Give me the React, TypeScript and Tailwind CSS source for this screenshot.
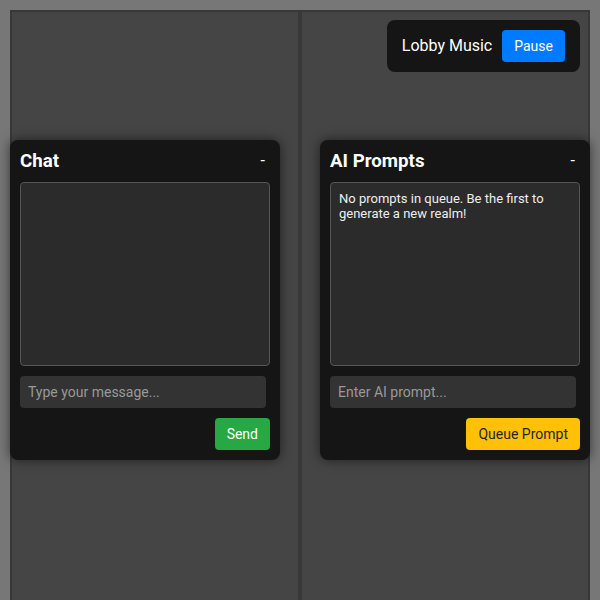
import { useState } from "react";

// ── Floating panel ─────────────────────────────────────────────────────────────
function Panel({
  title,
  placeholder,
  button,
  buttonClass,
  children,
  side,
}: {
  title: string;
  placeholder: string;
  button: string;
  buttonClass: string;
  children?: React.ReactNode;
  side: "left" | "right";
}) {
  const [value, setValue] = useState("");
  return (
    <div
      className={`absolute top-[130px] ${side === "left" ? "left-0" : "right-0"} w-[270px] p-[10px] rounded-lg bg-[#151515] shadow-[0_0_12px_rgba(0,0,0,0.55)] text-white`}
    >
      <div className="flex items-center justify-between h-[22px] mb-[10px]">
        <h3 className="text-[18.72px] font-bold leading-[22px]">{title}</h3>
        <button className="text-[16px] leading-none px-[5px]">-</button>
      </div>
      <div className="h-[184px] border border-[#555] rounded bg-[#2b2b2b] p-[8px] text-[13px] leading-[15px] text-[#eee]">
        {children}
      </div>
      <input
        value={value}
        onChange={(e) => setValue(e.target.value)}
        placeholder={placeholder}
        className="mt-[10px] w-[246px] h-[32px] px-[8px] rounded bg-[#333] text-[14px] text-white placeholder:text-[#999] outline-none"
      />
      <div className="flex justify-end mt-[10px]">
        <button className={`h-[32px] px-3 rounded text-[14px] ${buttonClass}`}>{button}</button>
      </div>
    </div>
  );
}

// ── Main Page ──────────────────────────────────────────────────────────────────
export default function App() {
  const [playing, setPlaying] = useState(true);

  return (
    <div
      className="w-[600px] h-[600px] overflow-hidden bg-[#777] pt-[10px] px-[10px]"
      style={{ fontFamily: "Roboto, 'Noto Sans', sans-serif" }}
    >
      <div className="relative flex h-[620px]">
        {/* Panes */}
        <div className="flex-1 bg-[#454545] border-2 border-[#383838]" />
        <div className="flex-1 bg-[#454545] border-2 border-[#383838]" />

        {/* Lobby music */}
        <div className="absolute top-[10px] right-[10px] flex items-center gap-[10px] py-[10px] px-[15px] rounded-lg bg-[#151515] text-white">
          <span className="text-[16px]">Lobby Music</span>
          <button
            onClick={() => setPlaying(!playing)}
            className="h-[32px] px-[12px] rounded bg-[#007bff] text-[14px] text-white"
          >
            {playing ? "Pause" : "Play"}
          </button>
        </div>

        <Panel
          side="left"
          title="Chat"
          placeholder="Type your message..."
          button="Send"
          buttonClass="bg-[#28a745] text-white"
        />
        <Panel
          side="right"
          title="AI Prompts"
          placeholder="Enter AI prompt..."
          button="Queue Prompt"
          buttonClass="bg-[#ffc107] text-[#212529]"
        >
          No prompts in queue. Be the first to generate a new realm!
        </Panel>
      </div>
    </div>
  );
}
